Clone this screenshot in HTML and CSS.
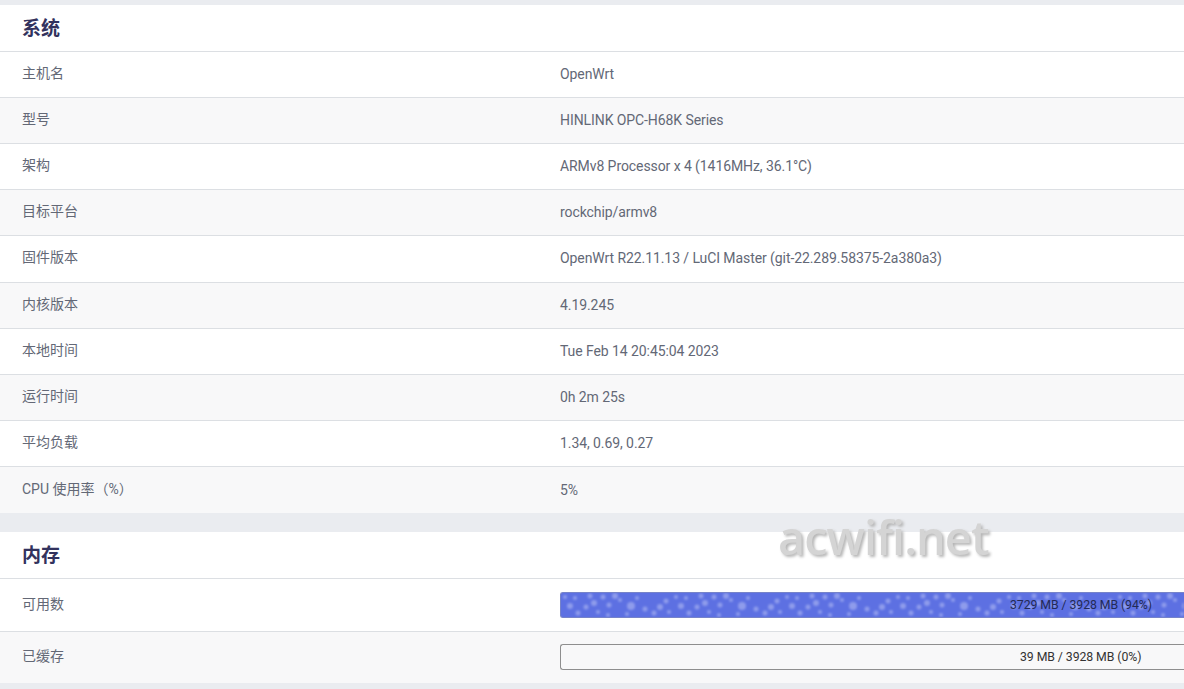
FILE: index.html
```html
<!DOCTYPE html>
<html lang="zh-CN">
<head>
<meta charset="utf-8">
<title>状态</title>
<link rel="stylesheet" href="styles.css">
</head>
<body>
<section class="card">
  <h3 class="card-title">系统</h3>
  <div class="row"><div class="label">主机名</div><div class="value">OpenWrt</div></div>
  <div class="row alt"><div class="label">型号</div><div class="value">HINLINK OPC-H68K Series</div></div>
  <div class="row"><div class="label">架构</div><div class="value">ARMv8 Processor x 4 (1416MHz, 36.1°C)</div></div>
  <div class="row alt"><div class="label">目标平台</div><div class="value">rockchip/armv8</div></div>
  <div class="row"><div class="label">固件版本</div><div class="value">OpenWrt R22.11.13 / LuCI Master (git-22.289.58375-2a380a3)</div></div>
  <div class="row alt"><div class="label">内核版本</div><div class="value">4.19.245</div></div>
  <div class="row"><div class="label">本地时间</div><div class="value">Tue Feb 14 20:45:04 2023</div></div>
  <div class="row alt"><div class="label">运行时间</div><div class="value">0h 2m 25s</div></div>
  <div class="row"><div class="label">平均负载</div><div class="value">1.34, 0.69, 0.27</div></div>
  <div class="row alt"><div class="label">CPU 使用率（%）</div><div class="value">5%</div></div>
</section>
<section class="card">
  <h3 class="card-title">内存</h3>
  <div class="row bar-row"><div class="label">可用数</div><div class="value"><div class="progress filled"><svg class="bubbles" aria-hidden="true"><defs><pattern id="bub" width="111" height="26" patternUnits="userSpaceOnUse"><g fill="#c0c8f6" fill-opacity=".5"><circle cx="4" cy="4" r="2"/><circle cx="9" cy="13" r="3"/><circle cx="14" cy="5" r="2"/><circle cx="17" cy="20" r="2.5"/><circle cx="25" cy="14" r="2.5"/><circle cx="29" cy="3" r="2.5"/><circle cx="33" cy="10" r="3"/><circle cx="37" cy="19" r="2"/><circle cx="42" cy="4" r="2.5"/><circle cx="48" cy="12" r="2.5"/><circle cx="54" cy="3" r="3"/><circle cx="59" cy="7" r="2"/><circle cx="70" cy="13" r="4"/><circle cx="66" cy="21" r="2"/><circle cx="76" cy="5" r="2"/><circle cx="84" cy="16" r="2.5"/><circle cx="93" cy="20" r="2.5"/><circle cx="99" cy="14" r="3"/><circle cx="105" cy="8" r="2.5"/><circle cx="108" cy="19" r="2"/><circle cx="47" cy="22" r="2"/></g></pattern><filter id="soft"><feGaussianBlur stdDeviation="1.1"/></filter></defs><rect width="100%" height="100%" fill="url(#bub)" filter="url(#soft)"/></svg><span class="progress-text">3729 MB / 3928 MB (94%)</span></div></div></div>
  <div class="row alt bar-row"><div class="label">已缓存</div><div class="value"><div class="progress"><span class="progress-text second">39 MB / 3928 MB (0%)</span></div></div></div>
</section>
<div class="watermark">acwifi.net</div>
</body>
</html>
```
FILE: styles.css
```css
* { box-sizing: border-box; }
html, body { margin: 0; width: 1184px; height: 689px; overflow: hidden; }
body {
  background: #eaecf0;
  padding-top: 5px;
  font-family: Roboto, "Noto Sans CJK SC", sans-serif;
  color: #636876;
  font-size: 14px;
  position: relative;
}
.card { background: #fff; margin-bottom: 18.6px; }
.card-title {
  margin: 0;
  height: 47px;
  padding-left: 22px;
  padding-bottom: 3px;
  display: flex;
  align-items: center;
  font-size: 19px;
  font-weight: 700;
  color: #32325d;
  border-bottom: 1px solid #dcdfe3;
}
.row {
  display: grid;
  grid-template-columns: 560px 624px;
  height: 46.12px;
  align-items: center;
  border-bottom: 1px solid #dcdfe3;
  padding-bottom: 3px;
}
.row:last-child { border-bottom: 0; }
.row.alt { background: #f8f8f9; }
.label { padding-left: 22px; padding-bottom: 2px; }
.value { padding-top: 2px; letter-spacing: -.08px; }
.bar-row { height: 53px; padding-bottom: 0; }
.bar-row:last-child { height: 51.5px; padding-bottom: 1px; }
.bar-row .label { padding-bottom: 3px; }
.bar-row .value { padding-top: 0; }
.progress {
  position: relative;
  overflow: hidden;
  height: 26px;
  width: 100%;
  border: 1px solid #8e8e8e;
  border-right: 0;
  border-radius: 3px 0 0 3px;
  display: flex;
  align-items: center;
  font-size: 12.3px;
  color: #333;
}
.progress.filled { background: #5d70e2; border-color: #7683c9; }
.bubbles { position: absolute; inset: 0; width: 100%; height: 100%; }
.progress-text { position: relative; padding-left: 449px; padding-top: 1px; white-space: nowrap; }
.progress-text.second { padding-left: 459px; }
.filled .progress-text { color: #232a55; }
.watermark {
  position: absolute;
  left: 778px;
  top: 505px;
  font-family: "Open Sans", sans-serif;
  font-size: 47px;
  font-weight: 600;
  letter-spacing: -1px;
  color: #d4d4d4;
  text-shadow: 2px 2px 3px #b5b5b5;
  filter: blur(.5px);
}
```
